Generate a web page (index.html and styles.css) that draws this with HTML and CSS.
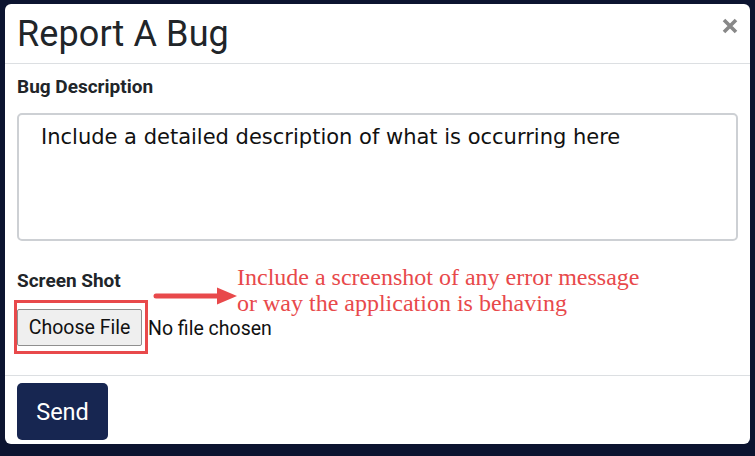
FILE: index.html
```html
<!DOCTYPE html>
<html>
<head>
<meta charset="utf-8">
<link rel="stylesheet" href="styles.css">
</head>
<body>
<div class="backdrop">
  <div class="modal">
    <div class="modal-header">
      <h1 class="title">Report A Bug</h1>
      <svg class="close" width="16" height="16" viewBox="0 0 16 16">
        <path d="M2 2 L14 14 M14 2 L2 14" stroke="#888" stroke-width="3.6" stroke-linecap="butt"/>
      </svg>
    </div>
    <div class="modal-body">
      <label class="label">Bug Description</label>
      <div class="textarea">Include a detailed description of what is occurring here</div>
      <label class="label label-shot">Screen Shot</label>
      <div class="file-row">
        <span class="highlight"><span class="file-btn">Choose File</span></span>
        <span class="file-status">No file chosen</span>
        <div class="annotation">
          <svg class="arrow" width="84" height="18" viewBox="0 0 84 18">
            <line x1="3" y1="9" x2="68" y2="9" stroke="#e8494b" stroke-width="5" stroke-linecap="round"/>
            <polygon points="64,0.5 84,9 64,17.5" fill="#e8494b"/>
          </svg>
          <div class="note">Include a screenshot of any error message<br>or way the application is behaving</div>
        </div>
      </div>
    </div>
    <div class="modal-footer">
      <button class="send">Send</button>
    </div>
  </div>
</div>
</body>
</html>
```
FILE: styles.css
```css
html, body {
  margin: 0;
  padding: 0;
}
body {
  width: 755px;
  height: 456px;
  overflow: hidden;
  background: #0c1430;
  font-family: Roboto, "Liberation Sans", sans-serif;
}
.backdrop {
  padding: 4px 0 0 5px;
}
.modal {
  width: 745px;
  height: 440px;
  background: #fff;
  border-radius: 6px;
  display: flex;
  flex-direction: column;
}
.modal-header {
  height: 60px;
  border-bottom: 1px solid #dcdfe2;
  display: flex;
  align-items: center;
  justify-content: space-between;
  padding: 0 12px 0 12px;
  box-sizing: border-box;
}
.title {
  margin: 0;
  font-size: 36px;
  font-weight: 400;
  color: #212529;
  letter-spacing: 0.1px;
}
.close {
  align-self: flex-start;
  margin-top: 14px;
  margin-right: 0;
}
.modal-body {
  padding: 12px 12px 0 12px;
  flex: 1;
  display: flex;
  flex-direction: column;
  border-bottom: 1px solid #dcdfe2;
}
.label {
  font-size: 19px;
  font-weight: 700;
  color: #212529;
  line-height: 21px;
}
.textarea {
  margin-top: 16px;
  height: 128px;
  box-sizing: border-box;
  border: 2px solid #cdd0d4;
  border-radius: 5px;
  padding: 9px 22px;
  font-family: "DejaVu Sans", Verdana, sans-serif;
  font-size: 21px;
  line-height: 26px;
  color: #111;
}
.label-shot {
  margin-top: 29px;
}
.file-row {
  position: relative;
  display: flex;
  align-items: center;
  margin-top: 9px;
  margin-left: -3px;
}
.highlight {
  display: inline-block;
  border: 3px solid #e8494b;
  padding: 6px 3px 5px 0;
}
.file-btn {
  display: inline-block;
  width: 125px;
  height: 37px;
  box-sizing: border-box;
  background: #efefef;
  border: 1px solid #8f8f8f;
  border-radius: 2px;
  font-size: 19.5px;
  line-height: 35px;
  text-align: center;
  color: #111;
}
.file-status {
  font-size: 19.5px;
  color: #111;
  margin-left: 0;
  margin-top: 2px;
}
.annotation {
  position: absolute;
  left: 139px;
  top: -36px;
  display: flex;
  align-items: flex-start;
}
.arrow {
  margin-top: 23px;
}
.note {
  font-family: "Liberation Serif", "Times New Roman", serif;
  font-size: 24px;
  line-height: 26px;
  color: #e8494b;
}
.modal-footer {
  height: 68px;
  padding: 7px 12px;
  box-sizing: border-box;
}
.send {
  width: 91px;
  height: 57px;
  background: #172651;
  border: none;
  border-radius: 5px;
  color: #fff;
  font-family: Roboto, "Liberation Sans", sans-serif;
  font-size: 23.5px;
}
```
